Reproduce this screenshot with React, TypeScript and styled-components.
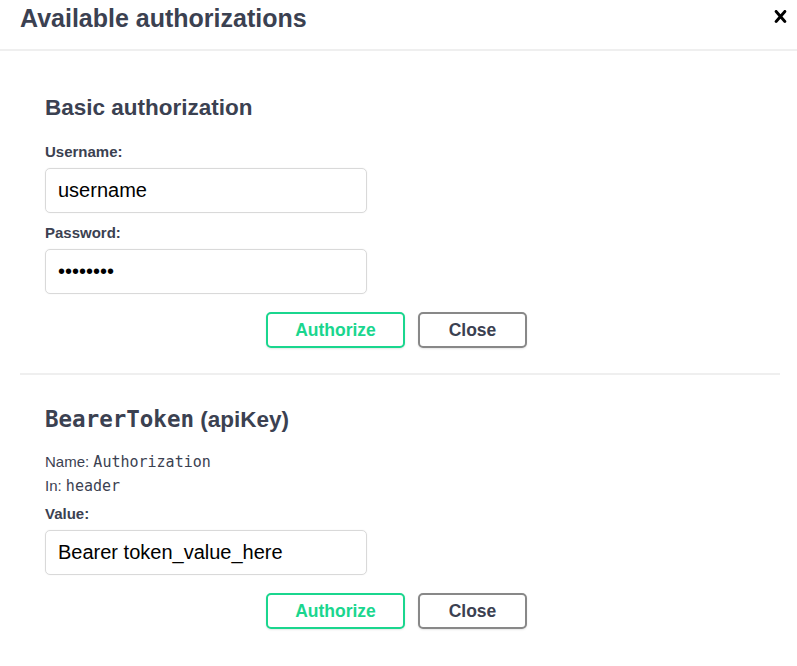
import styled, { createGlobalStyle } from "styled-components";

const GlobalStyle = createGlobalStyle`
  html, body {
    margin: 0;
    padding: 0;
    background: #fff;
  }
  body {
    font-family: "Liberation Sans", Arial, sans-serif;
    color: #3b4151;
  }
`;

const Modal = styled.div`
  width: 797px;
  min-height: 666px;
  background: #fff;
`;

const Header = styled.div`
  display: flex;
  align-items: flex-start;
  justify-content: space-between;
  height: 45px;
  padding: 4px 4px 0 20px;
  border-bottom: 2px solid #efefef;
`;

const Title = styled.h3`
  margin: 0;
  font-size: 25px;
  line-height: 29px;
  font-weight: 700;
  color: #3b4151;
`;

const CloseIcon = styled.button`
  display: flex;
  align-items: center;
  justify-content: center;
  width: 25px;
  height: 25px;
  padding: 0;
  border: none;
  background: none;
  cursor: pointer;
`;

const Content = styled.div`
  padding: 13px 17px 0 20px;
`;

const AuthContainer = styled.div<{ $last?: boolean }>`
  padding: 20px 25px 25px 25px;
  border-bottom: ${(p) => (p.$last ? "none" : "2px solid #efefef")};
`;

const SectionTitle = styled.h4`
  margin: 10px 0 20px 0;
  font-size: 22.5px;
  font-weight: 700;
  line-height: 28px;
  color: #3b4151;
`;

const Code = styled.code`
  font-family: "DejaVu Sans Mono", monospace;
  font-weight: 700;
`;

const FieldLabel = styled.label`
  display: block;
  padding-top: 1px;
  font-size: 15px;
  font-weight: 700;
  line-height: 18px;
  color: #3b4151;
`;

const Input = styled.input`
  display: block;
  box-sizing: border-box;
  width: 322px;
  height: 45px;
  margin: 7px 0 10px 0;
  padding: 0 12px;
  border: 1px solid #d9d9d9;
  border-radius: 5px;
  background: #fff;
  font-family: "Liberation Sans", Arial, sans-serif;
  font-size: 20px;
  color: #000;
  box-shadow: 0 0 2px rgba(0, 0, 0, 0.05);
  outline: none;
`;

const InfoRow = styled.p`
  margin: 0 0 6px 0;
  font-size: 15px;
  line-height: 18px;
  color: #3b4151;

  code {
    font-family: "DejaVu Sans Mono", monospace;
    font-size: 15px;
  }
`;

const InfoBlock = styled.div`
  margin: -1px 0 9px 0;
`;

const Actions = styled.div`
  display: flex;
  justify-content: center;
  gap: 13px;
  padding-right: 7px;
  margin-top: 18px;
`;

const Button = styled.button<{ $variant: "authorize" | "close" }>`
  box-sizing: border-box;
  height: 36px;
  width: ${(p) => (p.$variant === "authorize" ? "139px" : "109px")};
  border-radius: 5px;
  border: 2px solid ${(p) => (p.$variant === "authorize" ? "#1ad68e" : "#888")};
  color: ${(p) => (p.$variant === "authorize" ? "#1ad68e" : "#3b4151")};
  background: #fff;
  font-family: "Liberation Sans", Arial, sans-serif;
  font-size: 17.5px;
  font-weight: 700;
  box-shadow: 0 1px 2px rgba(0, 0, 0, 0.1);
  cursor: pointer;
`;

type Field = { label: string; value: string; type?: string };

const AuthActions = () => (
  <Actions>
    <Button $variant="authorize">Authorize</Button>
    <Button $variant="close">Close</Button>
  </Actions>
);

const basicFields: Field[] = [
  { label: "Username:", value: "username" },
  { label: "Password:", value: "password", type: "password" },
];

export default function App() {
  return (
    <Modal>
      <GlobalStyle />
      <Header>
        <Title>Available authorizations</Title>
        <CloseIcon aria-label="Close">
          <svg width="25" height="25" viewBox="0 0 20 20">
            <path
              fill="#000"
              d="M14.348 14.849c-.469.469-1.229.469-1.697 0L10 11.819l-2.651 3.029c-.469.469-1.229.469-1.697 0-.469-.469-.469-1.229 0-1.697l2.758-3.150-2.759-3.152c-.469-.469-.469-1.228 0-1.697.469-.469 1.228-.469 1.697 0L10 8.183l2.651-3.031c.469-.469 1.228-.469 1.697 0 .469.469.469 1.229 0 1.697l-2.758 3.152 2.758 3.150c.469.469.469 1.229 0 1.698z"
            />
          </svg>
        </CloseIcon>
      </Header>
      <Content>
        <AuthContainer>
          <SectionTitle>Basic authorization</SectionTitle>
          {basicFields.map((f) => (
            <div key={f.label}>
              <FieldLabel>{f.label}</FieldLabel>
              <Input type={f.type ?? "text"} defaultValue={f.value} />
            </div>
          ))}
          <AuthActions />
        </AuthContainer>
        <AuthContainer $last>
          <SectionTitle>
            <Code>BearerToken</Code> (apiKey)
          </SectionTitle>
          <InfoBlock>
            <InfoRow>
              Name: <code>Authorization</code>
            </InfoRow>
            <InfoRow>
              In: <code>header</code>
            </InfoRow>
          </InfoBlock>
          <FieldLabel>Value:</FieldLabel>
          <Input type="text" defaultValue="Bearer token_value_here" />
          <AuthActions />
        </AuthContainer>
      </Content>
    </Modal>
  );
}
